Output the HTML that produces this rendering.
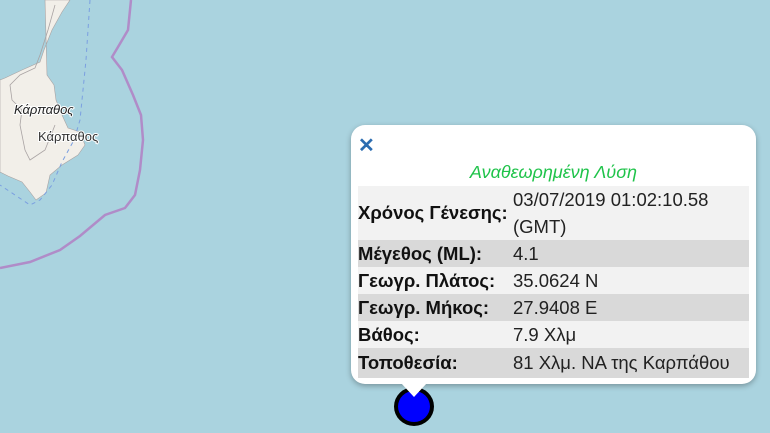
<!DOCTYPE html>
<html><head><meta charset="utf-8"><style>
body{margin:0;width:770px;height:433px;overflow:hidden;background:#aad3df;position:relative;font-family:"Liberation Sans",Arial,sans-serif}
svg.map{position:absolute;left:0;top:0}
.pop{position:absolute;left:351px;top:125px;width:405px;height:259px;background:#fff;border-radius:14px;box-shadow:0 2px 6px rgba(0,0,0,.3)}
.tip{position:absolute;left:401px;top:383px;width:0;height:0;border-left:13px solid transparent;border-right:13px solid transparent;border-top:14px solid #fff}
.x{position:absolute;left:7px;top:11px;color:#2b6cb0;font-weight:bold;font-size:20px;line-height:20px}
.title{position:absolute;left:0;width:405px;top:37px;text-align:center;color:#1fc34a;font-style:italic;font-size:18px}
table{position:absolute;left:7px;top:61px;width:391px;border-collapse:collapse;font-size:18.5px;color:#222}
td{padding:0;height:27px;vertical-align:middle;white-space:nowrap}
td.k{font-weight:bold;width:155px;color:#111}
tr.a{background:#f2f2f2} tr.b{background:#d9d9d9}
.dot{position:absolute;left:394px;top:387px;width:40px;height:39px;border-radius:50%;background:#0000ff;border:4px solid #000;box-sizing:border-box}
</style></head><body>
<svg class="map" width="770" height="433">
<polygon fill="#f2efe9" stroke="#a9a3a3" stroke-width="0.6" points="45,0 70,0 62,12 52,30 44,50 40,62 22,70 5,78 0,80 0,172 8,176 22,182 30,192 36,200 46,193 50,175 62,165 78,155 85,145 80,132 68,128 62,115 56,100 54,85 47,75"/>
<path d="M55,5 L48,30 L40,55 L35,68 L20,75 L10,85 L12,100 L22,110 L20,125 L25,150 L30,160 L45,150 L55,125" fill="none" stroke="#a9a3a3" stroke-width="0.8"/>
<path d="M90,0 L86,60 L80,120 L74,140 L62,162 L52,185 L40,200 L30,205 L15,195 L0,185" fill="none" stroke="#7b9fe0" stroke-width="1" stroke-dasharray="4,4"/>
<path d="M131,0 L128,30 L118,47 L112,57 L122,70 L133,95 L141,115 L143,140 L140,170 L135,195 L125,208 L105,215 L80,236 L60,250 L30,262 L0,268" fill="none" stroke="#b08cc8" stroke-width="2.5"/>
<text x="14" y="114" font-size="13" font-style="italic" fill="#222" font-family="Liberation Sans,sans-serif" stroke="#fff" stroke-width="2" paint-order="stroke">Κάρπαθος</text>
<text x="38" y="141" font-size="13" fill="#333" font-family="Liberation Sans,sans-serif" stroke="#fff" stroke-width="2" paint-order="stroke">Κάρπαθος</text>
</svg>
<div class="pop">
<div class="x">✕</div>
<div class="title">Αναθεωρημένη Λύση</div>
<table>
<tr class="a"><td class="k" style="height:54px">Χρόνος Γένεσης:</td><td style="line-height:27px">03/07/2019 01:02:10.58<br>(GMT)</td></tr>
<tr class="b"><td class="k">Μέγεθος (ML):</td><td>4.1</td></tr>
<tr class="a"><td class="k">Γεωγρ. Πλάτος:</td><td>35.0624 N</td></tr>
<tr class="b"><td class="k">Γεωγρ. Μήκος:</td><td>27.9408 E</td></tr>
<tr class="a"><td class="k">Βάθος:</td><td>7.9 Χλμ</td></tr>
<tr class="b"><td class="k" style="height:30px">Τοποθεσία:</td><td>81 Χλμ. ΝΑ της Καρπάθου</td></tr>
</table>
</div>
<div class="dot"></div>
<div class="tip"></div>
</body></html>
